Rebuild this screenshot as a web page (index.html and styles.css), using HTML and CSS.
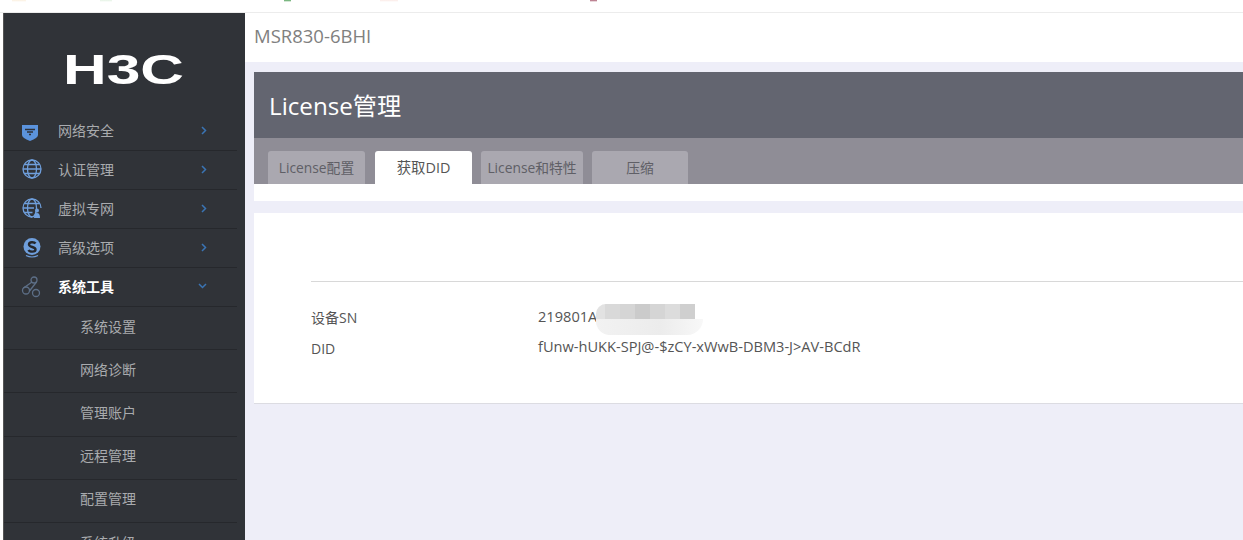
FILE: index.html
```html
<!DOCTYPE html>
<html lang="zh-CN">
<head>
<meta charset="utf-8">
<title>License管理</title>
<link rel="stylesheet" href="styles.css">
</head>
<body>
<div class="topstrip"></div>
<div class="app">
  <aside class="sidebar">
    <div class="logo"><svg class="logo-svg" width="140" height="64" viewBox="0 0 140 64"><text x="0" y="55" textLength="121" lengthAdjust="spacingAndGlyphs" class="logo-text">H3C</text></svg></div>
    <nav class="menu">
      <div class="item">
        <svg class="ico" width="20" height="20" viewBox="0 0 20 20"><path d="M1 5h16v10q0 3-8 6q-8-3-8-6z" fill="#5b93dc"/><path d="M4 9.500h10M6 12h6M8 14.500h2" fill="none" stroke="#2f3238" stroke-width="1.300"/></svg>
        <span class="label">网络安全</span><svg class="chev" width="6" height="9" viewBox="0 0 6 9"><path d="M1 1l3.500 3.500L1 8" fill="none" stroke="#3a74b4" stroke-width="1.500"/></svg>
      </div>
      <div class="item">
        <svg class="ico" width="20" height="20" viewBox="0 0 20 20"><g fill="none" stroke="#6f9fdc" stroke-width="1.300"><circle cx="11" cy="10" r="9"/><ellipse cx="11" cy="10" rx="4.500" ry="9"/><path d="M2 10h18M3.500 5.500h15M3.500 14.500h15"/></g></svg>
        <span class="label">认证管理</span><svg class="chev" width="6" height="9" viewBox="0 0 6 9"><path d="M1 1l3.500 3.500L1 8" fill="none" stroke="#3a74b4" stroke-width="1.500"/></svg>
      </div>
      <div class="item">
        <svg class="ico" width="20" height="20" viewBox="0 0 20 20"><g fill="none" stroke="#6f9fdc" stroke-width="1.300"><path d="M11 19a9 9 0 1 1 9-9"/><ellipse cx="11" cy="10" rx="4.500" ry="9"/><path d="M2 10h11M3.500 5.500h15M3.500 14.500h8"/></g><circle cx="16" cy="12.500" r="2" fill="#6f9fdc"/><path d="M13 20q0-5 3-5t3 5z" fill="#6f9fdc"/></svg>
        <span class="label">虚拟专网</span><svg class="chev" width="6" height="9" viewBox="0 0 6 9"><path d="M1 1l3.500 3.500L1 8" fill="none" stroke="#3a74b4" stroke-width="1.500"/></svg>
      </div>
      <div class="item">
        <svg class="ico" width="20" height="20" viewBox="0 0 20 20"><circle cx="11" cy="9.500" r="8.500" fill="#6f9fdc"/><path d="M14.500 6.500c-1-1.500-6.500-2-6.500 1 0 3 6.500 2 6.500 5 0 3-6 2.500-7 .5" fill="none" stroke="#25272c" stroke-width="2.400"/><path d="M5 18.500q6 3 12 0" fill="none" stroke="#6f9fdc" stroke-width="1.200"/></svg>
        <span class="label">高级选项</span><svg class="chev" width="6" height="9" viewBox="0 0 6 9"><path d="M1 1l3.500 3.500L1 8" fill="none" stroke="#3a74b4" stroke-width="1.500"/></svg>
      </div>
      <div class="item open">
        <svg class="ico" width="20" height="20" viewBox="0 0 20 20"><g fill="none" stroke="#5d6f87" stroke-width="1.300"><circle cx="13" cy="4" r="3"/><circle cx="5" cy="14.500" r="3.500"/><circle cx="15" cy="17" r="3.500"/><path d="M11 6 2.500 12M15.500 6l-7 9"/></g></svg>
        <span class="label">系统工具</span><svg class="chev-down" width="9" height="6" viewBox="0 0 9 6"><path d="M1 1l3.500 3.500L8 1" fill="none" stroke="#3a74b4" stroke-width="1.500"/></svg>
      </div>
      <div class="sub">系统设置</div>
      <div class="sub">网络诊断</div>
      <div class="sub">管理账户</div>
      <div class="sub">远程管理</div>
      <div class="sub">配置管理</div>
      <div class="sub">系统升级</div>
    </nav>
  </aside>
  <main class="main">
    <header class="head">MSR830-6BHI</header>
    <div class="panel">
      <h1 class="title">License管理</h1>
      <div class="tabs">
        <span class="tab t1">License配置</span>
        <span class="tab t2 active">获取DID</span>
        <span class="tab t3">License和特性</span>
        <span class="tab t4">压缩</span>
      </div>
      <div class="panel-foot"></div>
    </div>
    <section class="card">
      <div class="rule"></div>
      <div class="row r1"><span class="key">设备SN</span><span class="val">219801A<span class="mask"><span class="mask-top"><i></i><i></i><i></i><i></i><i></i><i></i><i></i></span></span></span></div>
      <div class="row r2"><span class="key">DID</span><span class="val">fUnw-hUKK-SPJ@-$zCY-xWwB-DBM3-J&gt;AV-BCdR</span></div>
    </section>
  </main>
</div>
</body>
</html>
```
FILE: styles.css
```css
* { box-sizing: border-box; }
html, body { margin: 0; height: 540px; overflow: hidden; background: #fff; }
body { font-family: "Open Sans", "Noto Sans CJK SC", sans-serif; }
.topstrip {
  height: 13px;
  border-bottom: 1px solid #ececec;
  background-color: #fff;
  background-image:
    linear-gradient(#fbf0de, #fff), linear-gradient(#e4f2e4, #fff), linear-gradient(#4f9f58, #fff),
    linear-gradient(#fbeae6, #fff), linear-gradient(#a85a70, #fff);
  background-repeat: no-repeat;
  background-size: 14px 2px, 12px 2px, 7px 2px, 18px 2px, 7px 2px;
  background-position: 12px 0, 100px 0, 284px 0, 380px 0, 590px 0;
}
.app { display: flex; height: 527px; padding-left: 3px; background: #fff; }
.sidebar { width: 242px; flex: none; background: #303338; border-left: 1px solid #555; overflow: hidden; }
.logo { height: 99px; padding: 16px 0 0 59px; }
.logo-svg { display: block; }
.logo-text { font-family: "Liberation Sans", sans-serif; font-weight: 700; font-size: 42px; fill: #fff; }
.menu { width: 233px; }
.item { height: 39px; display: flex; align-items: center; border-bottom: 1px solid #26282c; padding: 0 0 2px 17px; color: #a9abae; font-size: 14px; }
.ico { flex: none; overflow: visible; }
.label { margin-left: 17px; flex: 1; }
.chev { flex: none; margin-right: 30px; }
.chev-down { flex: none; margin-right: 30px; }
.open .label { color: #fff; font-weight: 600; }
.sub { height: 43.200px; display: flex; align-items: center; border-bottom: 1px solid #26282c; padding: 0 0 5px 76px; color: #a9abae; font-size: 14px; }
.main { flex: 1; min-width: 0; background: #eeeef8; }
.head { height: 49px; background: #fff; padding: 0 0 4px 9px; display: flex; align-items: center; color: #808080; font-size: 18.500px; }
.panel { margin: 10px 0 0 9px; background: #fff; }
.title { margin: 0; height: 66px; background: #636570; color: #fff; font-size: 24.200px; font-weight: 400; padding: 0 0 2px 15px; display: flex; align-items: center; }
.tabs { height: 46px; background: #8f8d96; padding: 13px 0 0 14px; display: flex; }
.tab { height: 33px; padding-bottom: 2px; background: #aaa8b0; border-radius: 3px 3px 0 0; color: #5f5f66; font-size: 13.800px; display: flex; align-items: center; justify-content: center; }
.t1 { width: 97px; margin-right: 10px; }
.t2 { width: 97px; margin-right: 9px; }
.t3 { width: 102px; margin-right: 9px; }
.t4 { width: 96px; }
.tab.active { background: #fff; color: #555; font-size: 14.400px; }
.panel-foot { height: 17px; background: #fff; }
.card { margin: 12px 0 0 9px; height: 191px; background: #fff; border-bottom: 1px solid #dcdce2; padding: 68px 0 0 57px; }
.rule { height: 1px; background: #d8d8d8; }
.row { display: flex; color: #555; font-size: 14.600px; line-height: 20px; }
.key { width: 227px; flex: none; padding-top: 2px; font-size: 14px; }
.val { position: relative; }
.r1 { margin-top: 24px; }
.r2 { margin-top: 8px; }
.r2 .key { padding-top: 3px; }
.mask { position: absolute; left: 58px; top: -2px; width: 107px; height: 31px; background: linear-gradient(#fff, #fff) right top / 8px 15px no-repeat, linear-gradient(90deg, #f2f2f2, #ececec 60%, #f8f8f8); border-radius: 10px 0 16px 14px; overflow: hidden; }
.mask-top { display: flex; height: 15px; width: 99px; }
.mask i { flex: none; width: 15px; height: 15px; background: #d5d5d5; }
.mask i:nth-child(1) { width: 9px; background: #e2e2e2; }
.mask i:nth-child(2) { background: #d9d9d9; }
.mask i:nth-child(4) { background: #cbcbcb; }
.mask i:nth-child(6) { background: #dcdcdc; }
.mask i:nth-child(7) { background: #cfcfcf; }
```
